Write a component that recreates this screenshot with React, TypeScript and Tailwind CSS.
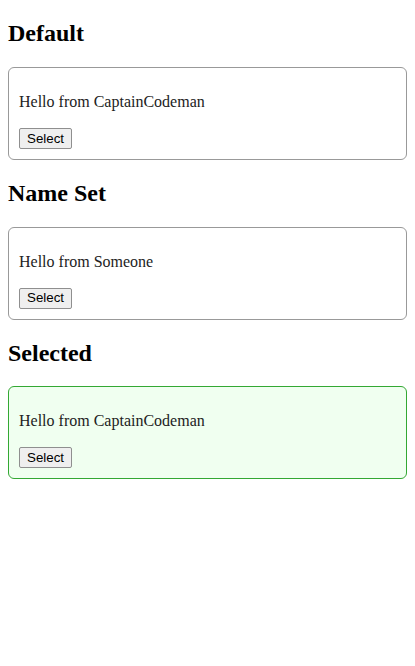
function Card(props: { name: string; selected?: boolean }) {
  return (
    <div
      className={
        "rounded-[6px] border px-[10px] pt-[9px] pb-[10px] " +
        (props.selected
          ? "border-[#33a833] bg-[#f0fff0]"
          : "border-[#999999] bg-white")
      }
    >
      <p className="mt-4 mb-[17px] text-[16px] leading-[normal] text-[#222]">
        Hello from {props.name}
      </p>
      <div className="flex">
        <button className="h-[21px] rounded-[2px] border border-[#8f8f8f] bg-[#efefef] px-[7px] font-['Liberation_Sans',Arial,sans-serif] text-[13.33px] leading-none text-black">
          Select
        </button>
      </div>
    </div>
  );
}

export default function App() {
  return (
    <div className="min-h-screen bg-white px-2 font-['Liberation_Serif','Times_New_Roman',serif] leading-[normal] text-black">
      <h2 className="my-[19.92px] text-[24px] font-bold leading-[normal]">Default</h2>
      <Card name="CaptainCodeman" />
      <h2 className="my-[19.92px] text-[24px] font-bold leading-[normal]">Name Set</h2>
      <Card name="Someone" />
      <h2 className="my-[19.92px] text-[24px] font-bold leading-[normal]">Selected</h2>
      <Card name="CaptainCodeman" selected />
    </div>
  );
}
